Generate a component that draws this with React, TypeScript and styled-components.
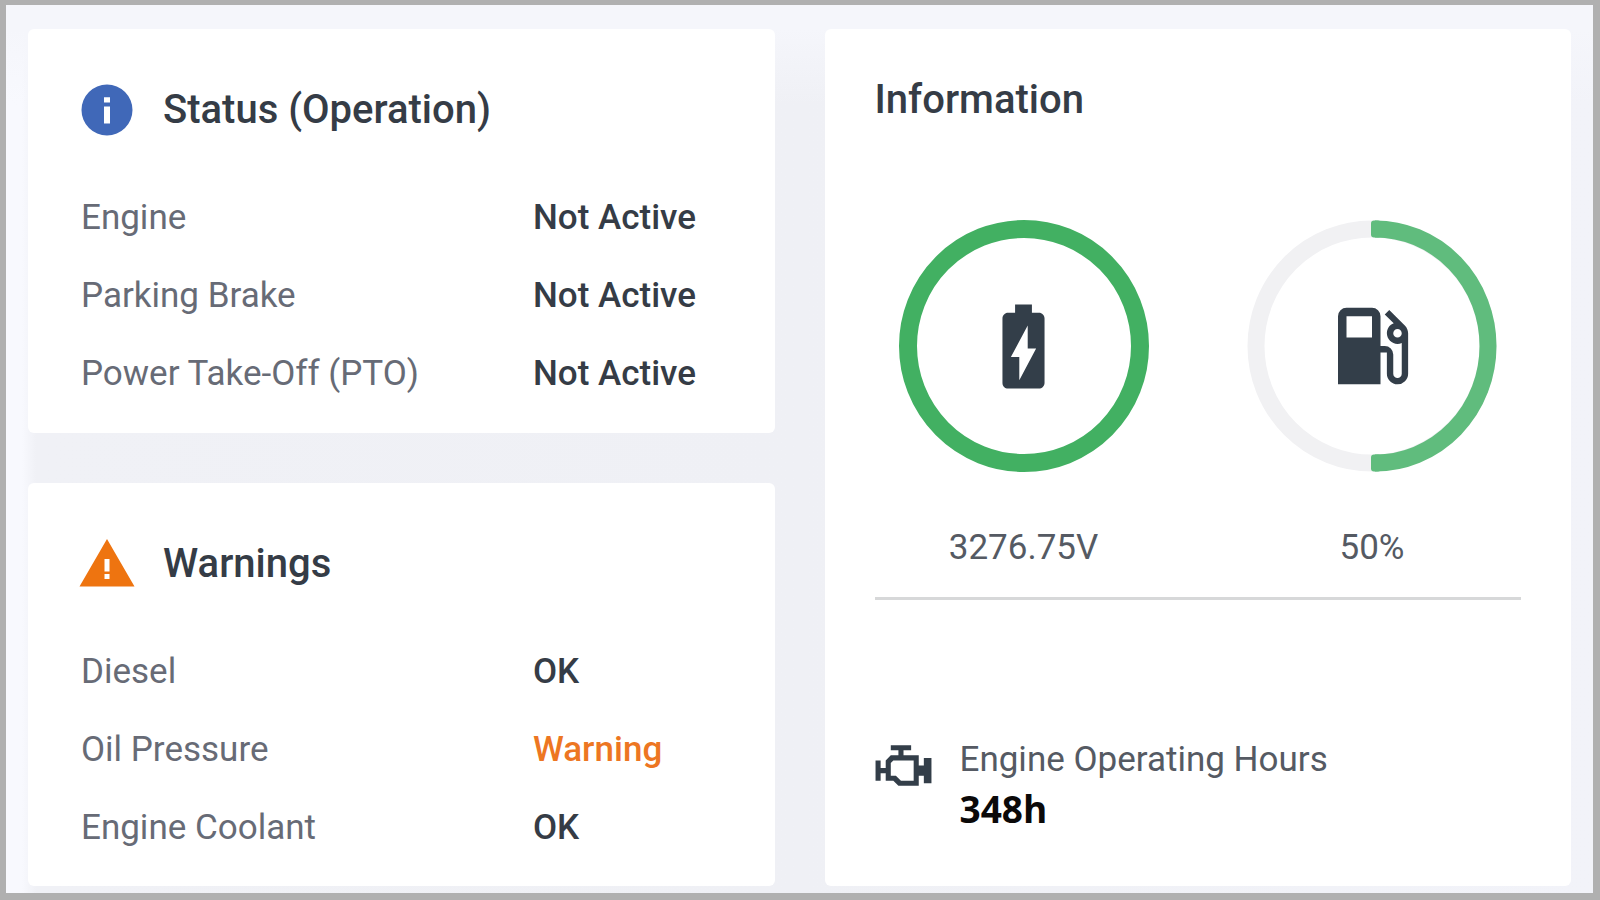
import React from "react";
import styled, { createGlobalStyle } from "styled-components";

const GlobalStyle = createGlobalStyle`
  * { box-sizing: border-box; }
  body {
    margin: 0;
    font-family: Roboto, "Liberation Sans", sans-serif;
    font-size: 35px;
    line-height: 42px;
    color: #353c46;
  }
`;

const Page = styled.main`
  min-height: 100vh;
  display: grid;
  grid-template-columns: 1fr 1fr;
  gap: 50px;
  padding: 24px 22px 7px;
  border: solid #b0b0b0;
  border-width: 5px 7px 7px 6px;
  background:
    linear-gradient(180deg, #f5f6fb 0, #f5f6fb 24px, transparent 100px),
    linear-gradient(90deg, #f8f9fe 0, #f8f9fe 16px, #f0f1f6 30px, #eff0f5 50%, #f2f3f9 100%);
`;

const Column = styled.div`
  display: grid;
  grid-template-rows: 1fr 1fr;
  gap: 50px;
`;

const Card = styled.section`
  background: #fff;
  border-radius: 6px;
  padding: 51px 48px 24px 49px;
`;

const CardHeader = styled.header`
  display: flex;
  align-items: center;
  gap: 26px;
  height: 60px;
  margin-bottom: 57px;
`;

const Title = styled.h2`
  margin: 0;
  font-size: 40px;
  line-height: 48px;
  font-weight: 500;
`;

const Readings = styled.dl`
  margin: 0 0 0 4px;
  display: grid;
  grid-template-columns: 452px 1fr;
  row-gap: 36px;
`;

const Label = styled.dt`
  color: #676b76;
`;

const Value = styled.dd<{ $alert?: boolean }>`
  margin: 0;
  font-weight: 500;
  color: ${(p) => (p.$alert ? "#ed7622" : "#353c46")};
`;

const InfoCard = styled(Card)`
  padding: 47px 50px 24px;
`;

const Gauges = styled.div`
  display: flex;
  justify-content: space-between;
  margin-top: 96px;
  padding: 0 24px 28px;
  border-bottom: 3px solid #d7d8d9;
`;

const Gauge = styled.figure`
  margin: 0;
  width: 250px;
  text-align: center;
`;

const Dial = styled.div`
  display: grid;
  place-items: center;
  height: 252px;
  margin-bottom: 55px;
  & > * { grid-area: 1 / 1; }
`;

const Caption = styled.figcaption`
  color: #555a63;
`;

const Hours = styled.div`
  display: flex;
  align-items: flex-start;
  gap: 26px;
  margin: 135px 0 0 -2px;
`;

const HoursText = styled.dl`
  margin: 4px 0 0;
`;

const HoursLabel = styled.dt`
  color: #555a63;
`;

const HoursValue = styled.dd`
  margin: 7px 0 0;
  font-family: "Open Sans", "Noto Sans", sans-serif;
  font-size: 37px;
  font-weight: 700;
  color: #0b0909;
`;

const Icon = styled.svg`
  display: block;
  flex: none;
  fill: currentColor;
`;

type IconProps = { size: number; color: string; d: string };
const Glyph = ({ size, color, d }: IconProps) => (
  <Icon width={size} height={size} viewBox="0 0 24 24" color={color} aria-hidden="true">
    <path fillRule="evenodd" d={d} />
  </Icon>
);

const INFO = "M12 1.8a10.2 10.2 0 1 0 0 20.4a10.2 10.2 0 0 0 0-20.4zM10.8 6.9h2.4v2.1h-2.4zM10.8 10.6h2.4v6.8h-2.4z";
const WARNING = "M1 21h22L12 2 1 21zm12-3h-2v-2h2v2zm0-3h-2v-5h2v5z";
const BATTERY =
  "M15.67 4H14V2h-4v2H8.33C7.6 4 7 4.6 7 5.33v15.33C7 21.4 7.6 22 8.33 22h7.33c.74 0 1.34-.6 1.34-1.33V5.33C17 4.6 16.4 4 15.67 4zM11 20v-5.5H9L13 7v5.5h2L11 20z";
const FUEL =
  "M18,10A1,1 0 0,1 17,9A1,1 0 0,1 18,8A1,1 0 0,1 19,9A1,1 0 0,1 18,10M12,10H6V5H12M19.77,7.23L19.78,7.22L16.06,3.5L15,4.56L17.11,6.67C16.17,7 15.5,7.93 15.5,9A2.5,2.5 0 0,0 18,11.5C18.36,11.5 18.69,11.42 19,11.29V18.5A1,1 0 0,1 18,19.5A1,1 0 0,1 17,18.5V14A2,2 0 0,0 15,12H14V5A2,2 0 0,0 12,3H6A2,2 0 0,0 4,5V21H14V13.5H15.5V18.5A2.5,2.5 0 0,0 18,21A2.5,2.5 0 0,0 20.5,18.5V9C20.5,8.31 20.22,7.68 19.77,7.23Z";
const ENGINE =
  "M8,10H16V18H11L9,16H7V11M7,4V6H10V8H7L5,10V13H3V10H1V18H3V15H5V18H8L10,20H18V16H20V19H23V9H20V12H18V8H12V6H15V4H7Z";

type Reading = { label: string; value: string; alert?: boolean };

const status: Reading[] = [
  { label: "Engine", value: "Not Active" },
  { label: "Parking Brake", value: "Not Active" },
  { label: "Power Take-Off (PTO)", value: "Not Active" },
];

const warnings: Reading[] = [
  { label: "Diesel", value: "OK" },
  { label: "Oil Pressure", value: "Warning", alert: true },
  { label: "Engine Coolant", value: "OK" },
];

const ReadingList = ({ items }: { items: Reading[] }) => (
  <Readings>
    {items.map((r) => (
      <React.Fragment key={r.label}>
        <Label>{r.label}</Label>
        <Value $alert={r.alert}>{r.value}</Value>
      </React.Fragment>
    ))}
  </Readings>
);

export default function App() {
  return (
    <>
      <GlobalStyle />
      <Page>
        <Column>
          <Card>
            <CardHeader>
              <Glyph size={60} color="#4068b8" d={INFO} />
              <Title>Status (Operation)</Title>
            </CardHeader>
            <ReadingList items={status} />
          </Card>
          <Card>
            <CardHeader>
              <Glyph size={60} color="#ee7410" d={WARNING} />
              <Title>Warnings</Title>
            </CardHeader>
            <ReadingList items={warnings} />
          </Card>
        </Column>
        <InfoCard>
          <Title>Information</Title>
          <Gauges>
            <Gauge>
              <Dial>
                <svg width="250" height="252" viewBox="0 0 250 252" fill="none" aria-hidden="true">
                  <ellipse cx="125" cy="126" rx="116" ry="117" stroke="#42b062" strokeWidth="18" />
                </svg>
                <Glyph size={101} color="#333e49" d={BATTERY} />
              </Dial>
              <Caption>3276.75V</Caption>
            </Gauge>
            <Gauge>
              <Dial>
                <svg width="250" height="252" viewBox="0 0 250 252" fill="none" aria-hidden="true">
                  <ellipse cx="125" cy="126" rx="116" ry="117" stroke="#f1f1f3" strokeWidth="17" />
                  <path d="M128 9A113 117 0 0 1 128 243" stroke="#60bc7d" strokeWidth="17" />
                  <rect x="124" y="0.5" width="10" height="17" rx="3" fill="#60bc7d" />
                  <rect x="124" y="234.5" width="10" height="17" rx="3" fill="#60bc7d" />
                </svg>
                <Glyph size={102} color="#333e49" d={FUEL} />
              </Dial>
              <Caption>50%</Caption>
            </Gauge>
          </Gauges>
          <Hours>
            <Glyph size={61} color="#333e49" d={ENGINE} />
            <HoursText>
              <HoursLabel>Engine Operating Hours</HoursLabel>
              <HoursValue>348h</HoursValue>
            </HoursText>
          </Hours>
        </InfoCard>
      </Page>
    </>
  );
}
